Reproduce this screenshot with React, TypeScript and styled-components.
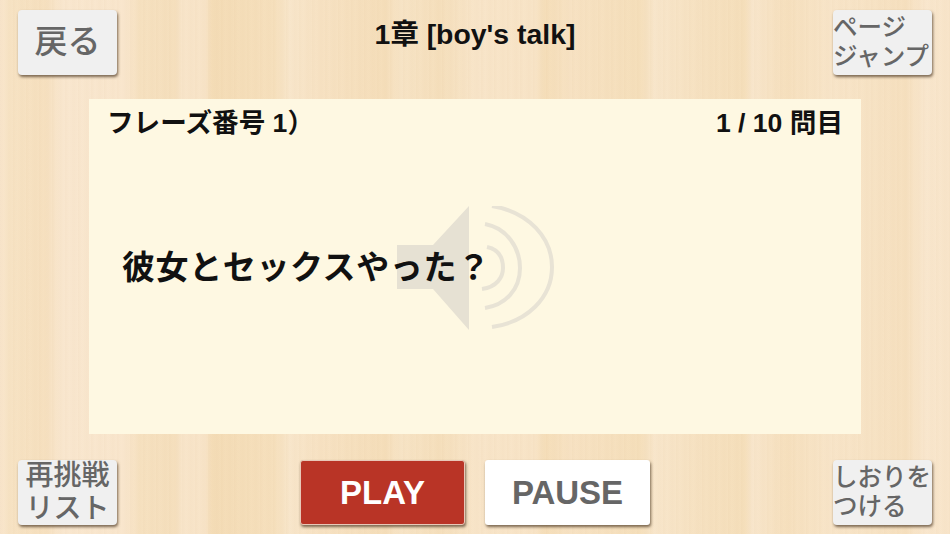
import React from 'react'
import styled, { createGlobalStyle } from 'styled-components'

const JP = `"Liberation Sans", "Noto Sans CJK JP", sans-serif`

const GlobalStyle = createGlobalStyle`
	html, body {
		margin: 0;
		padding: 0;
		width: 950px;
		height: 534px;
		overflow: hidden;
	}
`

// wood grain, one [x, colour] stop per plank edge
const grain: [number, string][] = [
	[0, '#f9e6cd'], [10, '#f7e3c4'], [45, '#f6e0bf'], [62, '#f9e7cf'], [125, '#f9e6cd'],
	[140, '#f6e1c0'], [175, '#f5dfbd'], [182, '#f8e5ca'], [205, '#f8e4c8'], [212, '#f4dcb6'],
	[275, '#f6e0bd'], [290, '#f8e6cb'], [320, '#f7e2c3'], [385, '#f5deba'], [400, '#f7e4c6'],
	[440, '#f5dfbc'], [475, '#f8e5c9'], [535, '#f8e4c7'], [545, '#f5deb9'], [570, '#f7e2c3'],
	[640, '#f5dfbb'], [655, '#f8e6cb'], [705, '#f6e1c0'], [745, '#f5dfbb'], [752, '#f8e6cc'],
	[785, '#f6e0be'], [830, '#f8e5c9'], [870, '#f7e3c5'], [905, '#f6e0bf'], [925, '#f9e7ce'],
	[950, '#f8e5ca'],
]
const grainStops = grain.map(([x, c]) => `${c} ${x}px`).join(', ')

const Page = styled.div`
	box-sizing: border-box;
	width: 950px;
	height: 534px;
	padding: 10px 18px 9px;
	display: flex;
	flex-direction: column;
	font-family: ${JP};
	background-color: #f7e3c4;
	background-image:
		repeating-linear-gradient(90deg,
			rgba(200, 160, 110, 0.05) 0, rgba(200, 160, 110, 0) 4px,
			rgba(200, 160, 110, 0.035) 9px, rgba(200, 160, 110, 0) 13px),
		linear-gradient(90deg, ${grainStops});
`

const TopBar = styled.header`
	display: flex;
	justify-content: space-between;
	height: 65px;
`

const Title = styled.h1`
	margin: 9px 0 0;
	font-size: 28.4px;
	line-height: 30px;
	font-weight: 700;
	color: #111;
`

const BottomBar = styled.footer`
	display: flex;
	justify-content: space-between;
	align-items: stretch;
	height: 65px;
`

const Transport = styled.div`
	display: flex;
	gap: 20px;
`

const Button = styled.button<{ $size?: number; $left?: boolean }>`
	box-sizing: border-box;
	width: 99px;
	height: 65px;
	padding: 0;
	border: none;
	border-radius: 4px;
	background: #f0f0f0;
	color: #666;
	font-family: ${JP};
	font-size: ${p => p.$size ?? 24.5}px;
	font-weight: 500;
	line-height: 1.16;
	white-space: nowrap;
	text-align: ${p => (p.$left ? 'left' : 'center')};
	box-shadow: 1px 2px 3px rgba(70, 50, 30, 0.7);
`

const TransportButton = styled.button<{ $primary?: boolean }>`
	box-sizing: border-box;
	width: 165px;
	height: 65px;
	padding: 0;
	border: ${p => (p.$primary ? '1px solid #e9c8b8' : 'none')};
	border-radius: 3px;
	background: ${p => (p.$primary ? '#b93426' : '#fff')};
	color: ${p => (p.$primary ? '#fff' : '#666')};
	font-family: ${JP};
	font-size: 33px;
	font-weight: 700;
	box-shadow: 1px 2px 3px rgba(70, 50, 30, 0.7);
`

const Card = styled.main`
	position: relative;
	box-sizing: border-box;
	width: 772px;
	height: 335px;
	margin: 24px 0 26px 71px;
	padding: 9px 18px 0;
	background: #fef8e2;
	color: #111;
`

const CardHead = styled.div`
	display: flex;
	justify-content: space-between;
	font-size: 26.6px;
	line-height: 30px;
	font-weight: 700;
`

const Phrase = styled.p`
	position: relative;
	margin: 109px 0 0 15px;
	font-size: 33px;
	line-height: 42px;
	font-weight: 700;
	letter-spacing: 0.6px;
`

const SpeakerIcon = styled.svg`
	position: absolute;
	left: 308px;
	top: 107px;
	width: 157px;
	height: 124px;
`

const Speaker: React.FC = () => (
	<SpeakerIcon viewBox="0 0 157 124" fill="none">
		<path d="M0 39H36L72 0V124L36 83H0Z" fill="#e6e1d3" />
		<g stroke="#e8e3d5" strokeWidth="4">
			<path d="M90 41C104 44 106 55 106 62C106 71 100 81 85 83" />
			<path d="M88 18C110 22 123 42 123 62C123 84 108 99 88 102" />
			<path d="M95 0C132 6 155 32 155 61C155 92 130 116 95 121" />
		</g>
	</SpeakerIcon>
)

const App: React.FC = () => (
	<Page>
		<GlobalStyle />
		<TopBar>
			<Button $size={33}>戻る</Button>
			<Title>1章 [boy's talk]</Title>
			<Button $left>
				ページ
				<br />
				ジャンプ
			</Button>
		</TopBar>
		<Card>
			<Speaker />
			<CardHead>
				<span>フレーズ番号 1）</span>
				<span>1 / 10 問目</span>
			</CardHead>
			<Phrase>彼女とセックスやった？</Phrase>
		</Card>
		<BottomBar>
			<Button $size={28}>
				再挑戦
				<br />
				リスト
			</Button>
			<Transport>
				<TransportButton $primary>PLAY</TransportButton>
				<TransportButton>PAUSE</TransportButton>
			</Transport>
			<Button $left>
				しおりを
				<br />
				つける
			</Button>
		</BottomBar>
	</Page>
)

export default App
